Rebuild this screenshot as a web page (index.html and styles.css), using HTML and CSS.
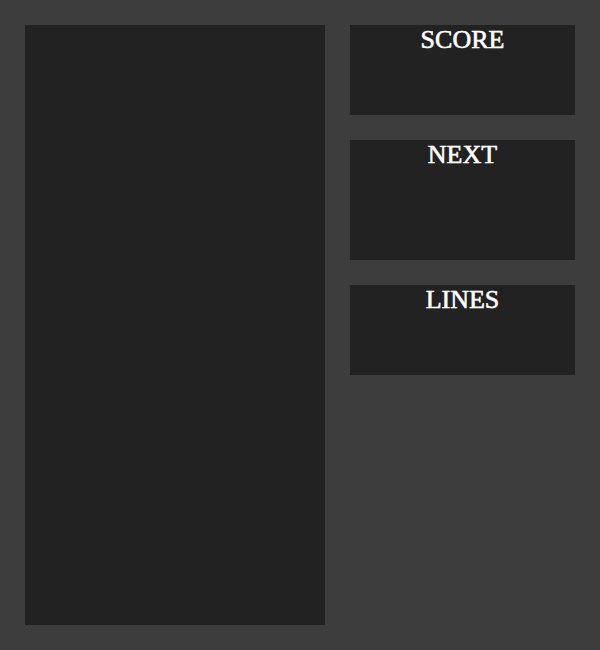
FILE: index.html
```html
<!DOCTYPE html>
<html>
<head>
    <meta charset="UTF-8">
    <title>Tetris</title>
    <link rel="stylesheet" href="styles.css">
</head>
<body>
    <div class="juego">
        <div class="tablero"></div>
        <div class="lateral">
            <div class="panel panelScore">
                <div class="titulo">SCORE</div>
            </div>
            <div class="panel panelNext">
                <div class="titulo">NEXT</div>
            </div>
            <div class="panel panelLines">
                <div class="titulo">LINES</div>
            </div>
        </div>
    </div>
</body>
</html>
```

FILE: styles.css
```css
html, body {
    margin: 0;
    height: 100%;
    background-color: #3d3d3d;
}
.juego {
    display: flex;
    gap: 25px;
    padding: 25px;
}
.tablero {
    width: 300px;
    height: 600px;
    background-color: #222222;
}
.lateral {
    display: flex;
    flex-direction: column;
    gap: 25px;
    width: 225px;
}
.panel {
    background-color: #222222;
}
.panelScore, .panelLines {
    height: 90px;
}
.panelNext {
    height: 120px;
}
.titulo {
    font-family: "Liberation Serif", "Times New Roman", serif;
    font-size: 26px;
    line-height: 29px;
    color: #ffffff;
    -webkit-text-stroke: 0.6px #ffffff;
    text-align: center;
}
```
